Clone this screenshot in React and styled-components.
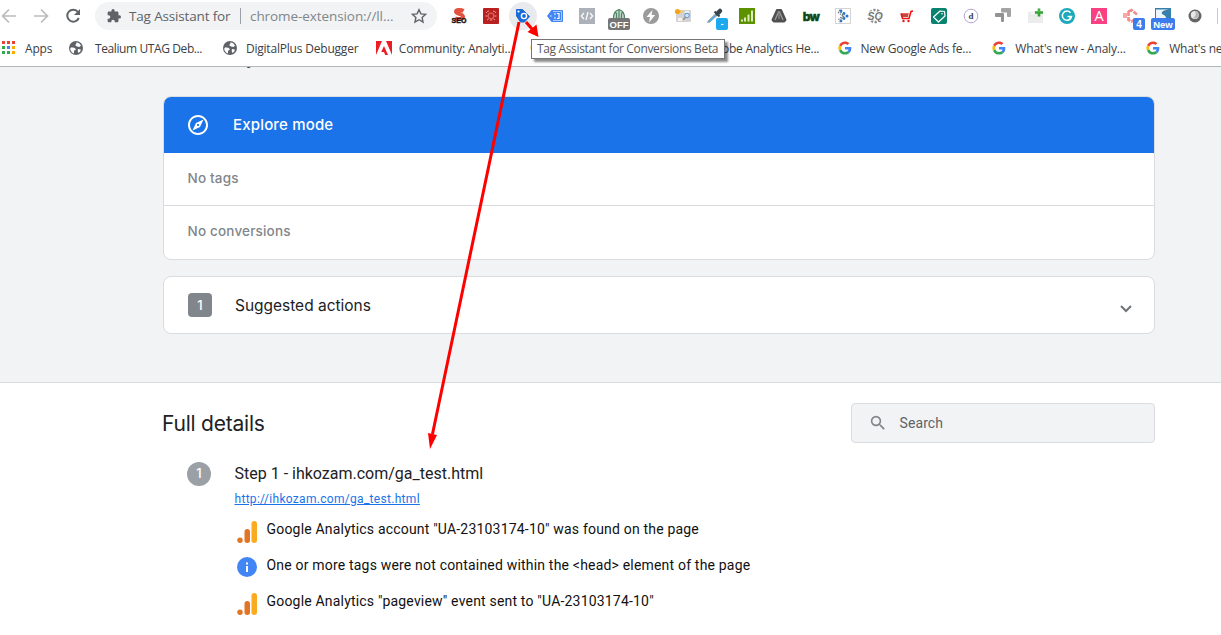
import React from "react";
import styled, { createGlobalStyle } from "styled-components";

const ui = `"Open Sans", "Noto Sans", sans-serif`;

const bookmarks = [
  { icon: "globe", label: "Tealium UTAG Deb...", gap: 11, spacing: -0.4 },
  { icon: "globe", label: "DigitalPlus Debugger", spacing: -0.2 },
  { icon: "adobe", label: "Community: Analyti...", gap: 7, spacing: -0.2 },
  { icon: "dot", label: "" },
  { icon: "adobe", label: "Adobe Analytics He...", spacing: -0.25 },
  { icon: "google", label: "New Google Ads fe...", gap: 7, spacing: -0.2 },
  { icon: "google", label: "What's new - Analy...", spacing: -0.2 },
  { icon: "google", label: "What's new in Ads...", spacing: -0.2 },
];

const findings = [
  { icon: "analytics", text: 'Google Analytics account "UA-23103174-10" was found on the page' },
  { icon: "info", text: "One or more tags were not contained within the <head> element of the page" },
  { icon: "analytics", text: 'Google Analytics "pageview" event sent to "UA-23103174-10"' },
];

// every toolbar extension is drawn in a 32x32 cell
const extensions = [
  <>
    <path d="M20.5 11c-2.500-1.500-7.500-1.500-7.500.800 0 2.500 7 1.800 7 5 0 2.500-5 3-8 1.500" fill="none" stroke="#e4523f" strokeWidth="4" />
    <text x="16" y="22.500" textAnchor="middle" fontSize="7" fontWeight="700" fill="#1a1010" stroke="#1a1010" strokeWidth=".4">SEO</text>
  </>,
  <>
    <rect x="8" y="8" width="16" height="16" rx="1" fill="#b9201f" />
    <circle cx="16" cy="16" r="2.800" fill="none" stroke="#d9625e" strokeWidth="1.300" />
    <path d="M11 13q1-2 3-2M21 13q-1-2-3-2M10.500 16h2M21.500 16h-2M12 20l1.500-1M20 20l-1.500-1M16 19v2" fill="none" stroke="#eba19d" />
  </>,
  <>
    <circle cx="16" cy="16" r="14" fill="#e8eaed" />
    <path d="M9.500 9.500h6l7 7-5 5.500h-4L9.500 16z" fill="#1a6bd8" stroke="#1a6bd8" strokeLinejoin="round" />
    <circle cx="11.500" cy="11.500" r="1.100" fill="#fff" />
    <circle cx="17" cy="16" r="2.600" fill="#1a6bd8" stroke="#fff" strokeWidth="1.400" />
  </>,
  <>
    <path d="M12.500 10H23q1 0 1 1v10q0 1-1 1H12.500L8 16z" fill="#4285f4" />
    <path d="M14 11.500h8.500v9H14" fill="none" stroke="#c6dafc" strokeWidth=".8" />
    <path d="M11 16h1.500M15 14h2M15 18h2M18 13.500h2v5h-2" fill="none" stroke="#fff" strokeWidth="1.200" />
  </>,
  <>
    <rect x="8" y="8" width="16" height="16" fill="#adb1b9" />
    <path d="M13 13l-2.700 3 2.700 3M19 13l2.700 3-2.700 3M17 12l-2 8" fill="none" stroke="#fff" strokeWidth="1.200" />
  </>,
  <>
    <path d="M10 18c0-11 12-11 12 0z" fill="#c3d9cb" />
    <path d="M10.500 18c0-5 2-7.500 5.500-8.500 3.500 1 5.500 3.500 5.500 8.500M16 10v8M13.500 18v-4l-1-2M18.500 18v-4l1-2" fill="none" stroke="#4d8465" strokeWidth="1.200" />
    <rect x="5" y="18" width="22" height="12" rx="2" fill="#757575" />
    <text x="16" y="28" textAnchor="middle" fontSize="9.500" fontWeight="700" fill="#fff">OFF</text>
  </>,
  <>
    <circle cx="16" cy="16" r="8" fill="#9b9b9b" />
    <path d="M17.500 10l-6 7h3.500l-1 5.500 6.200-7.500h-3.600z" fill="#fff" />
  </>,
  <>
    <rect x="9" y="10" width="15" height="12" rx="1" fill="#d3d3d3" />
    <path d="M11 18h4v3h-4zM18 11h4v2h-4z" fill="#f2f2f2" />
    <circle cx="10.500" cy="11.500" r="2.600" fill="#f2a41f" />
    <path d="M13 11.500h2.500" stroke="#f7c65c" strokeWidth="3" />
    <circle cx="20" cy="15.500" r="2.300" fill="#cfe5fb" stroke="#5b93d6" />
    <path d="M18.300 17.300l-2 2.500" stroke="#a98664" strokeWidth="1.400" />
  </>,
  <>
    <path d="M8.500 22.500l1-2 7.500-7 1.500 1.500-7.500 7z" fill="#58aede" stroke="#8c999f" strokeWidth=".8" />
    <path d="M15.500 11.500l5 5" stroke="#39444b" strokeWidth="2" />
    <path d="M18.500 13.500l2.500-2.500" stroke="#39444b" strokeWidth="4.500" strokeLinecap="round" />
    <rect x="17" y="18" width="12" height="12" rx="2" fill="#1ca9ed" />
    <path d="M22 24.500h2.500" stroke="#fff" strokeWidth="1.200" />
  </>,
  <>
    <rect x="8" y="8" width="16" height="16" fill="#5c9100" />
    <path d="M10 19.500h2v2h-2zM13 17.500h2v4h-2zM16.500 14.500h2v7h-2zM20 10.500h2v11h-2z" fill="#dcebc2" />
  </>,
  <>
    <path d="M14 10h4l4.500 10-1.500 1.500H11L9.500 20z" fill="#505050" stroke="#505050" strokeWidth="2" strokeLinejoin="round" />
    <path d="M12 20l3.500-8h1l3.500 8" fill="none" stroke="#9b9b9b" strokeWidth="1.300" />
    <path d="M16 14v5" stroke="#777" strokeWidth="2" />
  </>,
  <text x="16" y="20.500" textAnchor="middle" fontFamily="Inter" fontSize="12" fontWeight="800" letterSpacing="-.8" fill="#0b4719" stroke="#0b4719" strokeWidth=".5">bw</text>,
  <>
    <rect x="8.500" y="8.500" width="15" height="15" fill="#fff" stroke="#d4d4d4" />
    <g fill="#2578cf">
      <circle cx="14" cy="11" r="1.400" />
      <circle cx="17" cy="13.500" r="1.400" />
      <circle cx="20" cy="16" r="1.500" />
      <circle cx="17" cy="18.500" r="1.400" />
      <circle cx="14" cy="21" r="1.400" />
    </g>
    <path d="M11 12l4.500 4-4.500 4M12 10l5 6-5 6" fill="none" stroke="#6b7784" strokeWidth="1.200" strokeDasharray="1.500 1" />
  </>,
  <>
    <circle cx="16" cy="16" r="6" fill="none" stroke="#8b8b8b" strokeWidth="2.600" strokeDasharray="2.200 1.500" />
    <text x="16" y="20" textAnchor="middle" fontSize="10.500" fontStyle="italic" fontWeight="700" fill="#777" stroke="#fff" strokeWidth="1.500" paintOrder="stroke">SQ</text>
  </>,
  <>
    <path d="M10 13h8l-1 4h-6z" fill="#ef6660" />
    <path d="M12 14v3M14 14v3M16 14v3" stroke="#5b1717" strokeWidth=".7" />
    <path d="M10 13.500l1.500 5h6.500l2-7 2-.500" fill="none" stroke="#ec1515" strokeWidth="1.600" />
    <circle cx="12.500" cy="21" r="1.200" fill="#ec1515" />
    <circle cx="17.500" cy="21" r="1.200" fill="#ec1515" />
  </>,
  <>
    <rect x="8" y="8" width="16" height="16" rx="2" fill="#098270" />
    <path d="M10.500 17l6.500-6 4.500.5.500 4.500-6.500 6z" fill="none" stroke="#fff" strokeWidth="1.200" strokeLinejoin="round" />
    <circle cx="19" cy="13.800" r=".8" fill="#fff" />
  </>,
  <>
    <circle cx="16" cy="16" r="6.800" fill="#fff" stroke="#ab9bd0" strokeWidth=".9" />
    <text x="16" y="19" textAnchor="middle" fontFamily="Liberation Serif" fontSize="9" fontWeight="700" fill="#444049">d</text>
  </>,
  <>
    <path d="M15 8h8q1 0 1 1v7q0 1-1 1h-2q-1 0-1-1v-3.500h-5q-1 0-1-1V9q0-1 1-1z" fill="#a4a4a4" />
    <path d="M9 13h7q1 0 1 1v7q0 1-1 1h-1q-1 0-1-1v-4H9q-1 0-1-1v-2q0-1 1-1z" fill="#939393" />
  </>,
  <>
    <path d="M9 12h15v11H9z" fill="#ececec" />
    <path d="M11 12h5v3h-5z" fill="#f8f8f8" stroke="#ddd" strokeWidth=".6" />
    <path d="M20 8.500v8M16 12.500h8" stroke="#31a234" strokeWidth="2.600" />
    <path d="M20 9.500v3" stroke="#6cc95d" />
  </>,
  <>
    <circle cx="16" cy="16" r="8" fill="#1da9bc" />
    <path d="M19.500 12.700a4.600 4.600 0 1 0 1 3.800H16.500" fill="none" stroke="#fff" strokeWidth="1.500" />
    <path d="M19 17v3" stroke="#fff" strokeWidth="1.200" />
  </>,
  <>
    <rect x="8" y="8" width="16" height="16" fill="#f74182" />
    <text x="16" y="21" textAnchor="middle" fontFamily="Open Sans" fontSize="14.500" fontWeight="500" fill="#fff">A</text>
  </>,
  <>
    <path d="M8 13h4v5H8z" fill="#f6a9a9" />
    <path d="M13.500 11.500l3-1.500 5.500 4.500M13.500 11v9l3 1.500 4.500-3" fill="none" stroke="#f58c8c" strokeWidth="2.600" strokeDasharray="5 1" />
    <rect x="18" y="18" width="12" height="12" rx="2" fill="#3b7ded" />
    <text x="24" y="28" textAnchor="middle" fontSize="10" fontWeight="700" fill="#fff">4</text>
  </>,
  <>
    <path d="M8 8h16v10H8z" fill="#397fac" />
    <path d="M9 9.500h14q-6 0-8 2.500-1 2 2 3 2 1 2 3H9z" fill="#edf5fa" />
    <rect x="4" y="18" width="24" height="12" rx="2" fill="#3b7ded" />
    <text x="16" y="28" textAnchor="middle" fontSize="9.500" fontWeight="700" fill="#fff">New</text>
  </>,
  <>
    <circle cx="16" cy="16" r="6.500" fill="#656565" />
    <circle cx="15.800" cy="15" r="4" fill="#e9e9e9" />
    <path d="M16 11a4 4 0 0 1 3 6q-3 2-5 1 4-2 2-7z" fill="#b4b4b4" />
  </>,
];

function BookmarkIcon({ name }) {
  if (name === "globe") {
    return (
      <svg width="16" height="16" viewBox="0 0 16 16">
        <circle cx="8" cy="8" r="7" fill="#5f6368" />
        <path d="M2.200 8.500l1.300-1.300 3.500.8.800 1.700-1.800 1.100v2.800q-3.500-1.500-3.800-5.100zM8.500 2.300q3 .4 4.500 3.200l-1.500 1.500-2.500-.5L7 5l1.200-.8zM10 9l2.800.5-.5 2-1.800 1.600-.8-2z" fill="#fff" />
      </svg>
    );
  }
  if (name === "adobe") {
    return (
      <svg width="16" height="16" viewBox="0 0 16 16">
        <path d="M0 1h6L0 15zM10 1h6v14zM8 6l4 9H9.200L8 12H5.200z" fill="#ed1c24" />
      </svg>
    );
  }
  if (name === "dot") {
    return (
      <svg width="16" height="16" viewBox="0 0 16 16">
        <circle cx="7" cy="8" r="6.500" fill="#f9ab00" />
      </svg>
    );
  }
  return (
    <svg width="16" height="16" viewBox="-5 -5 58 58">
      <path fill="#EA4335" d="M24 9.500c3.540 0 6.710 1.220 9.210 3.600l6.850-6.850C35.900 2.380 30.470 0 24 0 14.620 0 6.510 5.380 2.560 13.220l7.980 6.190C12.430 13.720 17.740 9.500 24 9.500z" />
      <path fill="#4285F4" d="M46.980 24.550c0-1.570-.15-3.090-.38-4.550H24v9.020h12.940c-.58 2.960-2.260 5.480-4.780 7.180l7.730 6c4.510-4.180 7.090-10.360 7.090-17.650z" />
      <path fill="#FBBC05" d="M10.530 28.590c-.48-1.450-.76-2.990-.76-4.590s.27-3.140.76-4.590l-7.980-6.190C.92 16.460 0 20.120 0 24c0 3.880.92 7.540 2.560 10.780z" />
      <path fill="#34A853" d="M24 48c6.480 0 11.930-2.130 15.890-5.810l-7.730-6c-2.150 1.450-4.920 2.300-8.160 2.300-6.260 0-11.570-4.220-13.470-9.910l-7.980 6.190C6.510 42.620 14.620 48 24 48z" />
    </svg>
  );
}

function FindingIcon({ name }) {
  if (name === "info") {
    return (
      <svg width="24" height="24" viewBox="0 0 24 24">
        <circle cx="12" cy="11" r="10" fill="#4285f4" />
        <path d="M12 6.500v2M12 10v6" stroke="#fff" strokeWidth="2" />
      </svg>
    );
  }
  return (
    <svg width="24" height="24" viewBox="0 0 24 24">
      <rect x="16.500" y="1" width="5.500" height="22" rx="2.700" fill="#f9ab1f" />
      <rect x="9.500" y="9" width="5.500" height="14" rx="2.700" fill="#e37426" />
      <circle cx="5" cy="20.300" r="2.700" fill="#e37426" />
    </svg>
  );
}

function Browser() {
  return (
    <Chrome>
      <Toolbar>
        <NavIcons width="95" height="32" viewBox="0 0 95 32">
          <path d="M16 16H3M9 9.500L2.500 16 9 22.500M34 16h13M41 9.500l6.500 6.500-6.500 6.500" fill="none" stroke="#babcbe" strokeWidth="1.700" />
          <path d="M78 12a6 6 0 1 0 .8 6" fill="none" stroke="#5f6368" strokeWidth="2" />
          <path d="M80 9v6h-6z" fill="#5f6368" />
        </NavIcons>
        <Address>
          <svg width="14" height="14" viewBox="1 1 22 22">
            <path fill="#5f6368" d="M20.500 11H19V7c0-1.100-.9-2-2-2h-4V3.500a2.500 2.500 0 0 0-5 0V5H4c-1.100 0-2 .9-2 2v3.800h1.500a2.700 2.700 0 0 1 0 5.400H2V20c0 1.100.9 2 2 2h3.800v-1.500a2.700 2.700 0 0 1 5.400 0V22H17c1.100 0 2-.9 2-2v-4h1.500a2.500 2.500 0 0 0 0-5z" />
          </svg>
          <Site>Tag Assistant for</Site>
          <Rule />
          <Url>chrome-extension://ll...</Url>
          <svg width="16" height="16" viewBox="0 0 16 16">
            <path d="M8 1.700l1.900 4.200 4.600.5-3.400 3.100.9 4.500-4-2.300L4 14l.9-4.500-3.400-3.100 4.600-.5z" fill="none" stroke="#5f6368" strokeWidth="1.400" />
          </svg>
        </Address>
        <Extensions>
          {extensions.map((drawing, i) => (
            <Extension key={i} viewBox="0 0 32 32">
              {drawing}
            </Extension>
          ))}
        </Extensions>
        <ToolbarEnd />
      </Toolbar>
      <Bookmarks>
        <AppsLink>
          <svg width="14" height="14" viewBox="0 0 14 14">
            <path d="M0 0h3v3H0zM5 0h3v3H5zM10 0h3v3h-3z" fill="#ea4335" />
            <path d="M0 5h3v3H0zM0 10h3v3H0zM5 10h3v3H5z" fill="#34a853" />
            <path d="M5 5h3v3H5z" fill="#4285f4" />
            <path d="M10 5h3v3h-3zM10 10h3v3h-3z" fill="#fbab05" />
          </svg>
          Apps
        </AppsLink>
        {bookmarks.map((item, i) => (
          <Bookmark key={i} $gap={item.gap} $spacing={item.spacing}>
            <BookmarkIcon name={item.icon} />
            <span>{item.label}</span>
          </Bookmark>
        ))}
      </Bookmarks>
      <Tooltip>Tag Assistant for Conversions Beta</Tooltip>
    </Chrome>
  );
}

function App() {
  return (
    <Page>
      <GlobalStyle />
      <Browser />
      <Summary>
        <SummaryTitle>Summary</SummaryTitle>
        <Card>
          <ModeHeader>
            <svg width="24" height="24" viewBox="0 0 24 24" fill="#fff">
              <path d="M12 2C6.480 2 2 6.480 2 12s4.480 10 10 10 10-4.480 10-10S17.520 2 12 2zm0 18c-4.410 0-8-3.590-8-8s3.590-8 8-8 8 3.590 8 8-3.590 8-8 8zm-5.500-2.500l7.510-3.490L17.500 6.500 9.990 9.990 6.500 17.500zm5.500-6.600c.61 0 1.100.49 1.100 1.100s-.49 1.100-1.100 1.100-1.100-.49-1.100-1.100.49-1.100 1.100-1.100z" />
            </svg>
            <span>Explore mode</span>
          </ModeHeader>
          <CardRow>No tags</CardRow>
          <CardRow>No conversions</CardRow>
        </Card>
        <Card>
          <Actions>
            <Count>1</Count>
            <span>Suggested actions</span>
            <svg width="24" height="24" viewBox="0 0 24 24">
              <path d="M7 10l5 5 5-5" fill="none" stroke="#70757a" strokeWidth="2" />
            </svg>
          </Actions>
        </Card>
      </Summary>
      <Details>
        <DetailsHeader>
          <h2>Full details</h2>
          <Search>
            <svg width="16" height="16" viewBox="2 2 20 20">
              <path fill="#80868b" d="M15.500 14h-.79l-.28-.27A6.471 6.471 0 0 0 16 9.500 6.500 6.500 0 1 0 9.500 16c1.610 0 3.090-.59 4.230-1.570l.27.28v.79l5 4.990L20.490 19l-4.990-5zm-6 0C7.010 14 5 11.990 5 9.500S7.010 5 9.500 5 14 7.010 14 9.500 11.990 14 9.500 14z" />
            </svg>
            Search
          </Search>
        </DetailsHeader>
        <Step>
          <StepNumber>1</StepNumber>
          <div>
            <StepTitle>Step 1 - ihkozam.com/ga_test.html</StepTitle>
            <StepLink>http://ihkozam.com/ga_test.html</StepLink>
            {findings.map((item) => (
              <Finding key={item.text}>
                <FindingIcon name={item.icon} />
                <span>{item.text}</span>
              </Finding>
            ))}
          </div>
        </Step>
      </Details>
      <Arrows width="1221" height="635" viewBox="0 0 1221 635">
        <path d="M519 22L432.500 434M526 22l6 7" stroke="#f00" strokeWidth="3" />
        <path d="M428 433l9 2-7 14zM536.500 24.500L527.500 32l11 5z" fill="#f00" />
      </Arrows>
    </Page>
  );
}

const GlobalStyle = createGlobalStyle`
  * {
    box-sizing: border-box;
  }
  body {
    margin: 0;
    overflow: hidden;
  }
  svg {
    flex-shrink: 0;
  }
`;

const Page = styled.div`
  position: relative;
  width: 1221px;
  height: 635px;
  overflow: hidden;
  background: #fff;
  font-family: Roboto, sans-serif;
  white-space: nowrap;
`;

const Chrome = styled.header`
  position: relative;
  height: 67px;
  border-bottom: 1px solid #b5b7ba;
  font-family: ${ui};
`;

const Toolbar = styled.div`
  display: flex;
  height: 32px;
`;

const NavIcons = styled.svg`
  display: block;
`;

const Address = styled.div`
  display: flex;
  align-items: center;
  width: 342px;
  height: 28px;
  margin: 2px 6px 0 0;
  padding: 0 10px 0 12px;
  border-radius: 14px;
  background: #f1f3f4;
  font-size: 13.5px;
`;

const Site = styled.span`
  width: 101px;
  margin-left: 8px;
  color: #5f6368;
  letter-spacing: -0.16px;
`;

const Rule = styled.i`
  width: 1px;
  height: 16px;
  margin: 0 9px 0 10px;
  background: #9aa0a6;
`;

const Url = styled.span`
  flex: 1;
  color: #80868b;
  letter-spacing: -0.08px;
`;

const Extensions = styled.div`
  display: flex;
`;

const Extension = styled.svg`
  width: 32px;
  height: 32px;
  font-family: "Liberation Sans", sans-serif;
`;

const ToolbarEnd = styled.div`
  width: 1px;
  height: 16px;
  margin: 8px 0 0 6px;
  background: #c8cacd;
`;

const Bookmarks = styled.nav`
  display: flex;
  height: 32px;
  overflow: hidden;
  color: #3c4043;
  font-size: 12px;
`;

const AppsLink = styled.div`
  display: flex;
  flex: 0 0 68px;
  align-items: center;
  gap: 9px;
  padding-left: 2px;
  letter-spacing: -0.2px;
`;

const Bookmark = styled.div`
  display: flex;
  flex: 0 0 153.9px;
  align-items: center;
  gap: ${(props) => props.$gap || 8}px;
  letter-spacing: ${(props) => props.$spacing || 0}px;
`;

const Tooltip = styled.div`
  position: absolute;
  top: 39px;
  left: 531px;
  z-index: 1;
  width: 194px;
  height: 20px;
  padding-left: 5px;
  border: 1px solid #767676;
  background: #fff;
  box-shadow: 3px 3px 2px rgba(0, 0, 0, 0.45);
  color: #575757;
  font-size: 12px;
  line-height: 18px;
  letter-spacing: -0.35px;
`;

const Summary = styled.section`
  height: 316px;
  padding: 0 66px 0 163px;
  border-bottom: 1px solid #dadce0;
  background: #f1f3f4;
  overflow: hidden;
`;

const SummaryTitle = styled.h2`
  height: 28px;
  margin: -26px 0 27px;
  color: #202124;
  font: 400 22px/28px Inter, sans-serif;
  letter-spacing: -0.7px;
`;

const Card = styled.div`
  border: 1px solid #dadce0;
  border-radius: 8px;
  margin-bottom: 16px;
  background: #fff;
  overflow: hidden;
  font-family: Inter, sans-serif;
`;

const ModeHeader = styled.div`
  display: flex;
  align-items: center;
  gap: 23px;
  height: 56px;
  padding-left: 22px;
  background: #1a73e8;
  color: #fff;
  font-size: 15px;
  font-weight: 500;
  letter-spacing: 0.17px;

  span {
    margin-top: -2px;
  }
`;

const CardRow = styled.div`
  height: 52px;
  padding-left: 23.5px;
  color: #80868b;
  font-size: 13.5px;
  font-weight: 500;
  line-height: 51px;
  letter-spacing: 0.18px;

  & + & {
    border-top: 1px solid #dadce0;
    height: 54px;
  }
`;

const Actions = styled.div`
  display: flex;
  align-items: center;
  height: 56px;
  padding: 0 16px 0 24px;
  color: #202124;
  font-size: 15.500px;

  span {
    flex: 1;
    margin-left: 23px;
    letter-spacing: -0.02px;
  }

  svg {
    margin-top: 5px;
  }
`;

const Count = styled.div`
  width: 24px;
  height: 24px;
  border-radius: 4px;
  background: #80868b;
  color: #fff;
  font-size: 13px;
  font-weight: 500;
  line-height: 24px;
  text-align: center;
`;

const Details = styled.section`
  padding: 20px 66px 0 163px;
`;

const DetailsHeader = styled.div`
  display: flex;
  justify-content: space-between;
  height: 40px;

  h2 {
    margin: 0 0 0 -1px;
    color: #202124;
    font: 400 21px/41px Inter, sans-serif;
    letter-spacing: -0.22px;
  }
`;

const Search = styled.div`
  display: flex;
  align-items: center;
  gap: 14px;
  width: 304px;
  height: 40px;
  padding-left: 17.500px;
  border: 1px solid #dadce0;
  border-radius: 4px;
  background: #f1f3f4;
  color: #5f6368;
  font-size: 14px;
  letter-spacing: 0.1px;
`;

const Step = styled.div`
  display: flex;
  gap: 23.500px;
  padding: 19px 0 0 24px;
`;

const StepNumber = styled.div`
  width: 24px;
  height: 24px;
  border-radius: 50%;
  background: #9aa0a6;
  color: #fff;
  font: 500 13px/23px Inter, sans-serif;
  text-align: center;
`;

const StepTitle = styled.div`
  height: 24px;
  color: #202124;
  font-size: 16px;
  line-height: 23px;
`;

const StepLink = styled.a`
  display: block;
  height: 28px;
  color: #1a73e8;
  font-size: 12px;
  line-height: 26px;
  letter-spacing: 0.3px;
  text-decoration: underline;
`;

const Finding = styled.div`
  display: flex;
  align-items: center;
  gap: 8px;
  height: 36px;
  color: #111;
  font-size: 14px;
  letter-spacing: 0.19px;

  span {
    margin-top: -7px;
  }
`;

const Arrows = styled.svg`
  position: absolute;
  inset: 0;
  z-index: 2;
  pointer-events: none;
`;

export default App;
